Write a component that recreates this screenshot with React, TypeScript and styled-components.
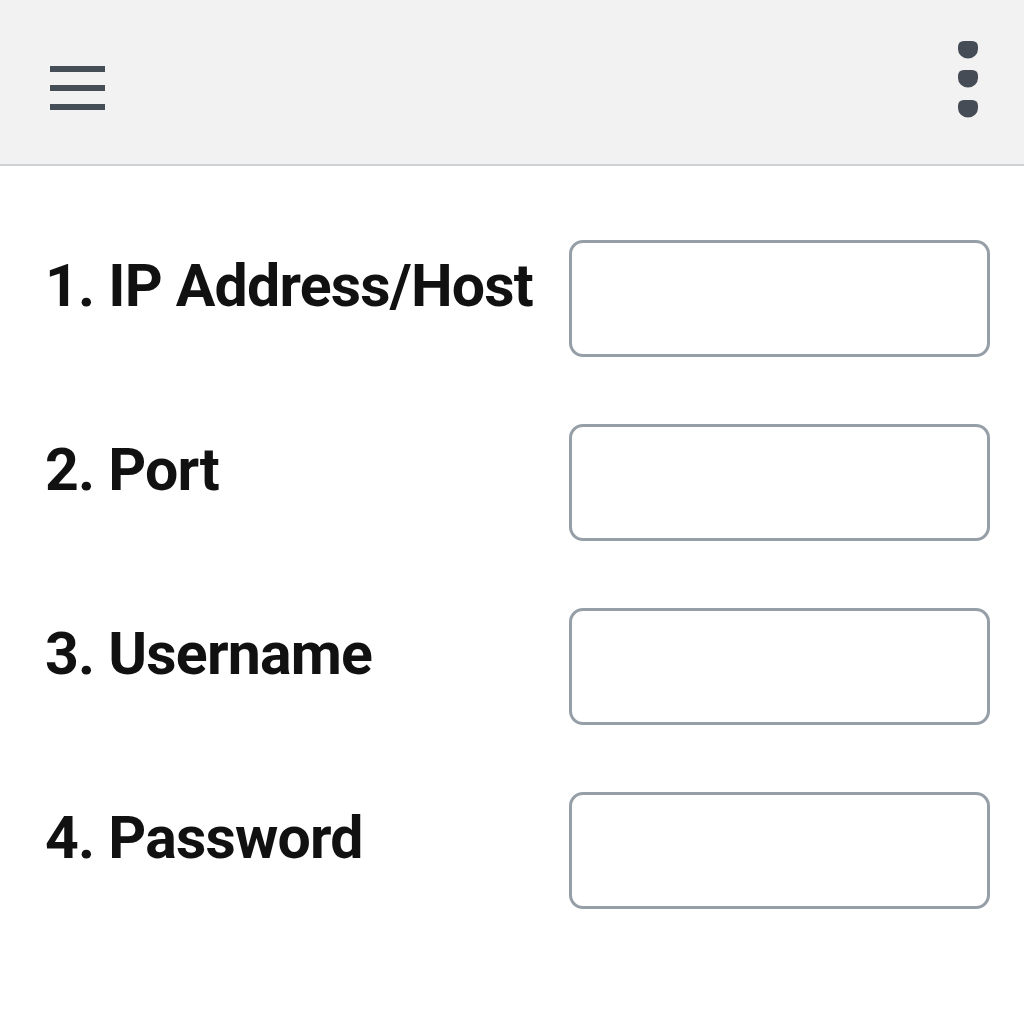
import styled, { createGlobalStyle } from 'styled-components';

const GlobalStyle = createGlobalStyle`
  html, body {
    margin: 0;
    padding: 0;
    background: #ffffff;
  }
  body {
    font-family: Roboto, 'Liberation Sans', Arial, sans-serif;
  }
`;

const Page = styled.div`
  width: 1024px;
  height: 1024px;
  background: #ffffff;
  overflow: hidden;
`;

const Header = styled.header`
  height: 164px;
  background: #f2f2f2;
  border-bottom: 2px solid #cfd2d5;
  display: flex;
  justify-content: space-between;
  align-items: flex-start;
  padding: 0 46px 0 50px;
`;

const MenuButton = styled.button`
  margin-top: 66px;
  padding: 0;
  border: 0;
  background: none;
  display: flex;
  cursor: pointer;
`;

const MoreButton = styled(MenuButton)`
  margin-top: 41px;
`;

const Form = styled.form`
  display: flex;
  flex-direction: column;
  gap: 67px;
  padding: 74px 34px 0 45px;
`;

const Row = styled.div`
  display: grid;
  grid-template-columns: 1fr 421px;
  align-items: center;
`;

const Label = styled.label`
  font-family: Roboto, 'Liberation Sans', Arial, sans-serif;
  font-size: 59px;
  font-weight: 700;
  letter-spacing: -0.8px;
  color: #111111;
  padding-bottom: 26px;
  white-space: nowrap;
`;

const Field = styled.input`
  box-sizing: border-box;
  height: 117px;
  width: 421px;
  border: 3px solid #969fa8;
  border-radius: 14px;
  background: #ffffff;
  outline: none;
  font-size: 40px;
  padding: 0 20px;
`;

const fields = [
  { id: 'host', label: '1. IP Address/Host', type: 'text' },
  { id: 'port', label: '2. Port', type: 'text' },
  { id: 'user', label: '3. Username', type: 'text' },
  { id: 'pass', label: '4. Password', type: 'password' },
];

// rounded drop-like dot, a bit flatter on top
const Dot = ({ y }: { y: number }) => (
  <path
    d={`M6 ${y} H14 Q20 ${y} 20 ${y + 6} V${y + 8} A10 9.5 0 0 1 0 ${y + 8} V${y + 6} Q0 ${y} 6 ${y} Z`}
  />
);

const App = () => (
  <Page>
    <GlobalStyle />
    <Header>
      <MenuButton aria-label="menu">
        <svg width="55" height="44" viewBox="0 0 55 44" fill="#454d56">
          <rect x="0" y="0" width="55" height="6" />
          <rect x="0" y="19" width="55" height="6" />
          <rect x="0" y="38" width="55" height="6" />
        </svg>
      </MenuButton>
      <MoreButton aria-label="more">
        <svg width="20" height="78" viewBox="0 0 20 78" fill="#454c55">
          <Dot y={0} />
          <Dot y={29} />
          <Dot y={59} />
        </svg>
      </MoreButton>
    </Header>
    <Form>
      {fields.map((f) => (
        <Row key={f.id}>
          <Label htmlFor={f.id}>{f.label}</Label>
          <Field id={f.id} type={f.type} />
        </Row>
      ))}
    </Form>
  </Page>
);

export default App;
